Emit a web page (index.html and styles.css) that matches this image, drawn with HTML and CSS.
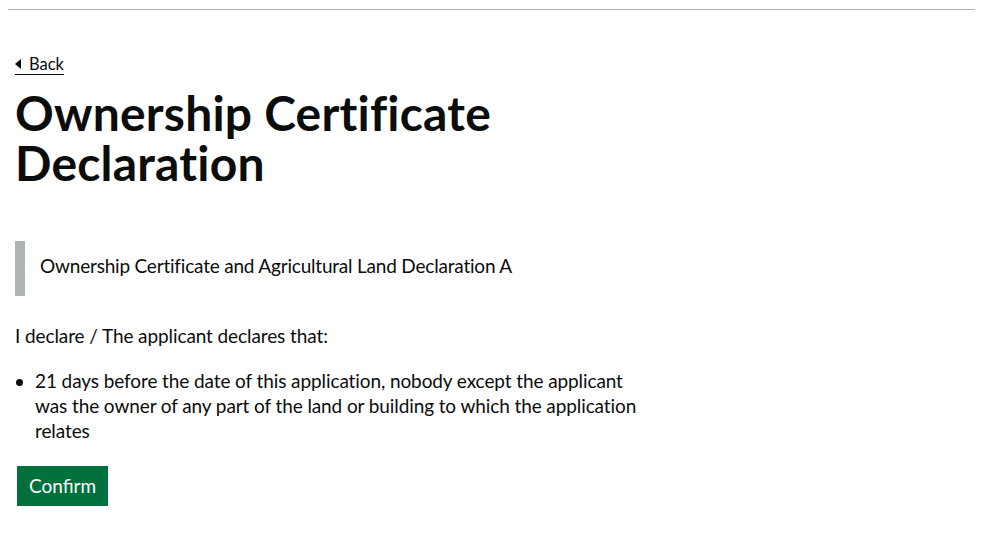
FILE: index.html
```html
<!DOCTYPE html>
<html lang="en">
<head>
<meta charset="utf-8">
<title>Ownership Certificate Declaration</title>
<link rel="stylesheet" href="styles.css">
</head>
<body>
<div class="header-rule"></div>
<main class="page">
  <a class="back-link" href="#">Back</a>
  <h1 class="heading-xl">Ownership Certificate Declaration</h1>
  <div class="inset-text">Ownership Certificate and Agricultural Land Declaration A</div>
  <p class="body">I declare / The applicant declares that:</p>
  <ul class="bullets">
    <li>21 days before the date of this application, nobody except the applicant was the owner of any part of the land or building to which the application relates</li>
  </ul>
  <button class="button" type="button">Confirm</button>
</main>
</body>
</html>
```
FILE: styles.css
```css
html, body {
  margin: 0;
  padding: 0;
  background: #ffffff;
}
body {
  font-family: "Lato", "Liberation Sans", sans-serif;
  color: #0b0c0c;
}
.header-rule {
  margin: 9px 10px 0 8px;
  border-top: 1px solid #b1b4b6;
}
.page {
  padding: 0 15px;
  max-width: 627px;
}
.back-link {
  display: block;
  width: fit-content;
  position: relative;
  margin-top: 44px;
  padding-left: 14px;
  font-size: 16.5px;
  line-height: 20px;
  color: #0b0c0c;
  text-decoration: none;
  border-bottom: 1px solid #0b0c0c;
}
.back-link::before {
  content: "";
  position: absolute;
  left: 0;
  top: 5px;
  width: 0;
  height: 0;
  border-style: solid;
  border-width: 5px 6px 5px 0;
  border-color: transparent #0b0c0c transparent transparent;
}
.heading-xl {
  margin: 13px 0 53px;
  font-size: 48px;
  line-height: 50px;
  font-weight: 700;
  letter-spacing: 0.2px;
}
.inset-text {
  margin: 0 0 27px;
  padding: 12px 15px 18px;
  border-left: 10px solid #b1b4b6;
  font-size: 19px;
  line-height: 25px;
  letter-spacing: -0.2px;
}
.body {
  margin: 0 0 20px;
  font-size: 19px;
  line-height: 25px;
  letter-spacing: -0.1px;
}
.bullets {
  margin: 0 0 23px;
  padding-left: 20px;
  font-size: 19px;
  line-height: 25px;
  letter-spacing: -0.1px;
  list-style: none;
}
.bullets li {
  position: relative;
}
.bullets li::before {
  content: "";
  position: absolute;
  left: -19px;
  top: 11px;
  width: 7px;
  height: 7px;
  border-radius: 50%;
  background: #0b0c0c;
}
.button {
  display: block;
  margin: 0 0 0 2px;
  padding: 8px 10px 8px;
  border: 2px solid transparent;
  border-radius: 0;
  background: #00703c;
  box-shadow: 0 2px 0 #002d18;
  color: #ffffff;
  font-family: "Lato", "Liberation Sans", sans-serif;
  font-size: 19px;
  line-height: 20px;
  cursor: pointer;
}
```
